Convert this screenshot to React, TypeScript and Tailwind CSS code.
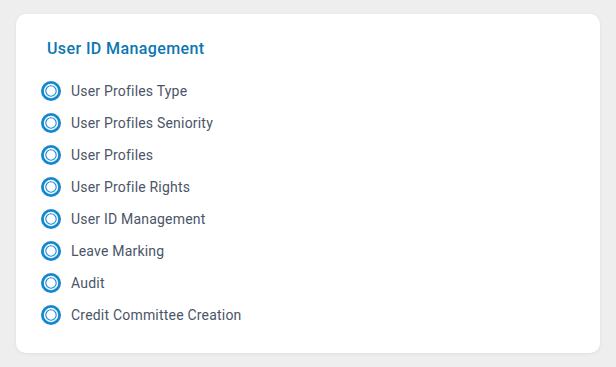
const items = [
  "User Profiles Type",
  "User Profiles Seniority",
  "User Profiles",
  "User Profile Rights",
  "User ID Management",
  "Leave Marking",
  "Audit",
  "Credit Committee Creation",
];

function RadioIcon() {
  return (
    <svg width="22" height="22" viewBox="0 0 22 22" className="shrink-0">
      <circle cx="11" cy="11" r="8.6" fill="white" stroke="#1688d0" strokeWidth="2.8" />
      <circle cx="11" cy="11" r="5.2" fill="white" stroke="#1688d0" strokeWidth="1.1" />
    </svg>
  );
}

export default function App() {
  return (
    <div
      className="w-[616px] h-[367px] bg-[#eeeeee] pt-[14px] pl-[16px] pr-[16px]"
      style={{ fontFamily: "Roboto, 'Liberation Sans', sans-serif" }}
    >
      <div className="h-[339px] rounded-[10px] bg-white shadow-[0_1px_4px_rgba(0,0,0,0.06)] pl-[24px] pt-[24px]">
        <h2 className="pl-[7px] text-[16px] font-medium leading-[22px] tracking-[0.4px] text-[#0b76b3]">
          User ID Management
        </h2>
        <ul className="mt-[20px] flex flex-col gap-[10px]">
          {items.map((label) => (
            <li key={label} className="flex h-[22px] items-center gap-[9px]">
              <RadioIcon />
              <span className="text-[14px] leading-[22px] tracking-[0.2px] text-[#4a5568]">{label}</span>
            </li>
          ))}
        </ul>
      </div>
    </div>
  );
}
